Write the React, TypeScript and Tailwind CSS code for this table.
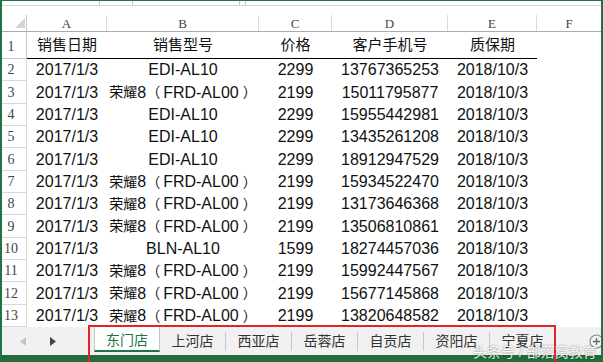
const cols = ['w-[80px]', 'w-[152px]', 'w-[73px]', 'w-[116px]', 'w-[89px]'];
const letters = ['A', 'B', 'C', 'D', 'E'];
const heads = ['销售日期', '销售型号', '价格', '客户手机号', '质保期'];

const HONOR = 'honor';
const rows: { h: string; cells: string[] }[] = [
  { h: 'h-[22px]', cells: ['2017/1/3', 'EDI-AL10', '2299', '13767365253', '2018/10/3'] },
  { h: 'h-[23px]', cells: ['2017/1/3', HONOR, '2199', '15011795877', '2018/10/3'] },
  { h: 'h-[22px]', cells: ['2017/1/3', 'EDI-AL10', '2299', '15955442981', '2018/10/3'] },
  { h: 'h-[22px]', cells: ['2017/1/3', 'EDI-AL10', '2299', '13435261208', '2018/10/3'] },
  { h: 'h-[23px]', cells: ['2017/1/3', 'EDI-AL10', '2299', '18912947529', '2018/10/3'] },
  { h: 'h-[22px]', cells: ['2017/1/3', HONOR, '2199', '15934522470', '2018/10/3'] },
  { h: 'h-[22px]', cells: ['2017/1/3', HONOR, '2199', '13173646368', '2018/10/3'] },
  { h: 'h-[23px]', cells: ['2017/1/3', HONOR, '2199', '13506810861', '2018/10/3'] },
  { h: 'h-[22px]', cells: ['2017/1/3', 'BLN-AL10', '1599', '18274457036', '2018/10/3'] },
  { h: 'h-[22px]', cells: ['2017/1/3', HONOR, '2199', '15992447567', '2018/10/3'] },
  { h: 'h-[23px]', cells: ['2017/1/3', HONOR, '2199', '15677145868', '2018/10/3'] },
  { h: 'h-[22px]', cells: ['2017/1/3', HONOR, '2199', '13820648582', '2018/10/3'] },
];

const tabs = ['上河店', '西亚店', '岳蓉店', '自贡店', '资阳店', '宁夏店'];

function Honor() {
  return (
    <>
      <span className="text-[14px]">荣耀</span>8<span className="text-[14px] mr-[3px]">（</span>FRD-AL00
      <span className="text-[14px] ml-[4px]">）</span>
    </>
  );
}

export default function App() {
  return (
    <div className="relative w-[603px] h-[362px] overflow-hidden bg-white border-l-2 border-r-2 border-t border-[#217346] flex flex-col font-['Liberation_Sans','Noto_Sans_CJK_SC',sans-serif] text-[16px] text-[#111]">
      {/* formula bar edge */}
      <div className="h-[14px] shrink-0">
        <div className="flex h-[5px] border-b border-[#d6d6d6]">
          <div className="w-[98px] border-r border-[#c6c6c6]" />
          <div className="w-[32px]" />
          <div className="w-[108px] border-x border-[#c6c6c6]" />
          <div className="w-[5px]" />
          <div className="flex-1 border-l border-[#c6c6c6]" />
        </div>
      </div>

      {/* column headers */}
      <div className="flex h-[17px] shrink-0 border-b border-[#ababab] font-['Liberation_Serif',serif] text-[13px] text-[#444]">
        <div className="w-[25px] border-r border-[#c8c8c8] flex items-end justify-end pr-[1px] pb-[3px]">
          <svg width="10" height="10" viewBox="0 0 10 10">
            <polygon points="10,0 10,10 0,10" fill="#d4d4d4" />
          </svg>
        </div>
        {letters.map((l, i) => (
          <div key={l} className={`${cols[i]} border-r border-[#dadada] flex items-center justify-center pt-[1px]`}>
            {l}
          </div>
        ))}
        <div className="flex-1 flex items-center justify-center pt-[1px]">F</div>
      </div>

      {/* row 1 */}
      <div className="flex h-[27px] shrink-0">
        <div className="w-[25px] border-r border-b border-[#c8c8c8] flex items-end justify-center pr-[6px] pb-[1px] font-['Liberation_Serif',serif] text-[14px] text-[#444]">
          1
        </div>
        <div className="flex border-b border-black">
          {heads.map((t, i) => (
            <div key={t} className={`${cols[i]} flex items-center justify-center text-[15px]`}>
              {t}
            </div>
          ))}
        </div>
        <div className="flex-1" />
      </div>

      {/* data rows */}
      {rows.map((r, ri) => (
        <div key={ri} className={`flex ${r.h} shrink-0`}>
          <div className="w-[25px] border-r border-b border-[#d8d8d8] flex items-center justify-center pr-[6px] font-['Liberation_Serif',serif] text-[14px] text-[#444]">
            {ri + 2}
          </div>
          {r.cells.map((c, ci) => (
            <div key={ci} className={`${cols[ci]} flex items-center justify-center whitespace-nowrap`}>
              {c === HONOR ? <Honor /> : c}
            </div>
          ))}
          <div className="flex-1" />
        </div>
      ))}

      {/* sheet tabs */}
      <div className="flex h-[28px] shrink-0 bg-[#f1f1f1] items-start">
        <div className="w-[92px] h-full flex items-center">
          <svg width="6" height="9" viewBox="0 0 6 9" className="ml-[18px]">
            <polygon points="6,0 6,9 0,4.5" fill="#c4c4c4" />
          </svg>
          <svg width="6" height="9" viewBox="0 0 6 9" className="ml-[24px]">
            <polygon points="0,0 0,9 6,4.5" fill="#444" />
          </svg>
        </div>
        <div className="w-[66px] h-[25px] bg-white border-x border-[#c6c6c6] border-b-2 border-b-[#217346] flex items-center justify-center pt-[3px] text-[14px] text-[#217346]">
          东门店
        </div>
        {tabs.map((t) => (
          <div key={t} className="w-[66px] h-[19px] mt-[5px] border-r border-[#c6c6c6] flex items-center justify-center text-[14px] text-[#333]">
            {t}
          </div>
        ))}
        <div className="flex-1 h-full flex items-center justify-end mr-[-3px]">
          <svg width="15" height="15" viewBox="0 0 15 15">
            <circle cx="7.5" cy="7.5" r="6.5" fill="none" stroke="#888" strokeWidth="1.2" />
            <path d="M7.5 4v7M4 7.5h7" stroke="#666" strokeWidth="1.3" />
          </svg>
        </div>
      </div>

      {/* status bar */}
      <div className="flex-1 bg-[#236b3b]" />

      {/* highlight frame */}
      <div className="absolute left-[86px] top-[324px] w-[468px] h-[50px] border-2 border-[#e0262c]" />

      {/* watermark */}
      <div className="absolute left-[471px] top-[341px] text-[14px] text-white/90 whitespace-nowrap [text-shadow:0_0_2px_rgba(0,0,0,0.45)]">
        头条号 / 部落窝教育
      </div>
    </div>
  );
}
